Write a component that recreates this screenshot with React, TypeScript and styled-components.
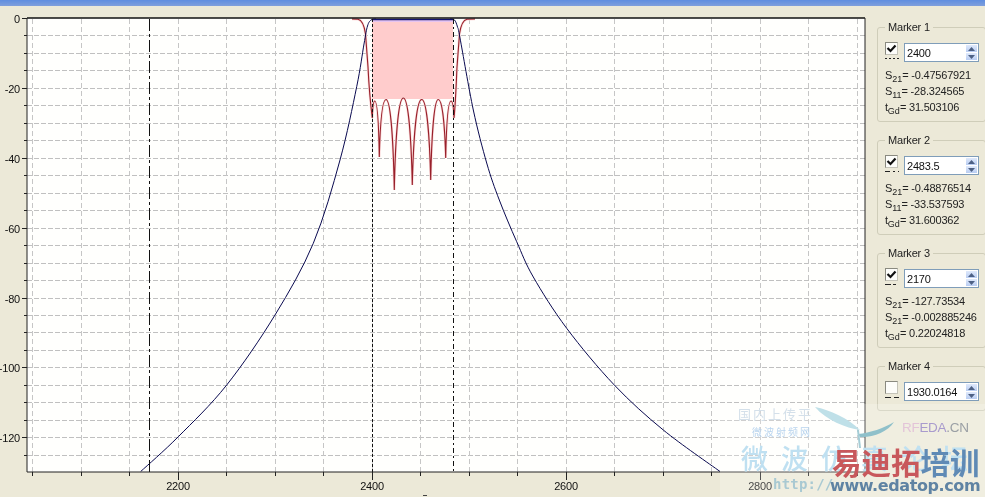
import React from "react";
import styled, { createGlobalStyle } from "styled-components";

const Global = createGlobalStyle`
  html, body { margin: 0; padding: 0; background: #ece9d8; }
  #root { width: 985px; height: 497px; }
`;

const Page = styled.div`
  position: relative;
  width: 985px;
  height: 497px;
  overflow: hidden;
  display: flex;
  flex-direction: column;
  background: #ece9d8;
  font-family: "Liberation Sans", Arial, sans-serif;
  color: #222;
  filter: blur(0.3px);
`;

const TitleStrip = styled.div`
  height: 6px;
  flex: none;
  background: linear-gradient(#5f8ee0, #7f9fdc);
`;

const Body = styled.div`
  flex: 1;
  display: flex;
  min-height: 0;
`;

const ChartSvg = styled.svg`
  display: block;
  flex: none;
  width: 877px;
  height: 491px;
`;

const AxisLabel = styled.text`
  font-family: "Liberation Sans", Arial, sans-serif;
  font-size: 11px;
  letter-spacing: -0.2px;
  fill: #111;
`;

const Side = styled.aside`
  flex: 1;
  display: flex;
  flex-direction: column;
  gap: 18px;
  padding: 21px 0 0 0;
  margin-right: -1px;
`;

const Group = styled.section<{ $h: number }>`
  position: relative;
  height: ${(p) => p.$h}px;
  box-sizing: border-box;
  border: 1px solid #cfcdb9;
  border-radius: 3px;
  padding: 15px 0 0 7px;
`;

const GroupTitle = styled.span`
  position: absolute;
  top: -7px;
  left: 7px;
  padding: 0 3px;
  background: #ece9d8;
  font-size: 11px;
  line-height: 13px;
  letter-spacing: -0.2px;
  color: #222;
`;

const MarkerRow = styled.div`
  display: flex;
  gap: 5px;
`;

const CheckCol = styled.div`
  width: 14px;
  display: flex;
  flex-direction: column;
  gap: 2px;
  margin-top: -1px;
`;

const CheckBox = styled.span`
  width: 13px;
  height: 13px;
  box-sizing: border-box;
  display: block;
  background: #fdfdfa;
  border: 1px solid #c4c3b8;
  border-top-color: #8a8a80;
  border-left-color: #8a8a80;
`;

const CheckMark = styled.svg`
  display: block;
  width: 11px;
  height: 11px;
`;

const Sample = styled.svg`
  display: block;
  width: 14px;
  height: 3px;
`;

const Spin = styled.div`
  width: 75px;
  height: 19px;
  box-sizing: border-box;
  display: flex;
  background: #fff;
  border: 1px solid #7f9db9;
`;

const SpinInput = styled.input`
  flex: 1;
  min-width: 0;
  border: 0;
  outline: 0;
  padding: 0 0 0 2px;
  background: transparent;
  font-family: "Liberation Sans", Arial, sans-serif;
  font-size: 11px;
  letter-spacing: -0.2px;
  color: #111;
`;

const SpinButtons = styled.div`
  width: 11px;
  margin: 1px;
  display: flex;
  flex-direction: column;
  gap: 1px;
`;

const SpinButton = styled.div`
  flex: 1;
  display: flex;
  align-items: center;
  justify-content: center;
  background: linear-gradient(#dfe9fb, #b9cdf2);
`;

const Arrow = styled.svg`
  display: block;
  width: 7px;
  height: 4px;
`;

const Readouts = styled.div`
  margin-top: 5px;
`;

const Readout = styled.div`
  height: 16px;
  line-height: 16px;
  font-size: 11px;
  letter-spacing: -0.2px;
  white-space: nowrap;
  color: #222;
`;

const Sub = styled.sub`
  font-size: 9px;
  line-height: 0;
  vertical-align: -3px;
  letter-spacing: 0;
`;

/* Watermark stamped over the lower right corner of the picture */
const WatermarkGlow = styled.div`
  position: absolute;
  left: 720px;
  top: 404px;
  width: 265px;
  height: 93px;
  background: rgba(255, 255, 255, 0.22);
`;

const Mark = styled.div<{ $x: number; $y: number }>`
  position: absolute;
  left: ${(p) => p.$x}px;
  top: ${(p) => p.$y}px;
  white-space: nowrap;
`;

const FaintTitle = styled(Mark)`
  font-family: "Noto Sans CJK SC", sans-serif;
  font-size: 13px;
  line-height: 14px;
  letter-spacing: 2px;
  color: #d4e0ea;
`;

const FaintSub = styled(Mark)`
  font-family: "Noto Sans CJK SC", sans-serif;
  font-size: 10px;
  line-height: 12px;
  letter-spacing: 2px;
  color: #b9d4ee;
`;

const Forum = styled(Mark)`
  font-family: "Noto Sans CJK SC", sans-serif;
  font-size: 27px;
  font-weight: 500;
  line-height: 30px;
  letter-spacing: 13px;
  color: #bfe0f1;
`;

const HttpText = styled(Mark)`
  font-family: "DejaVu Sans Mono", monospace;
  font-size: 14px;
  line-height: 16px;
  font-weight: 700;
  letter-spacing: 0.2px;
  color: #a9c9d2;
`;

const RfText = styled(Mark)`
  font-size: 13.5px;
  line-height: 14px;
  letter-spacing: -0.3px;
  display: flex;
`;

const RfPart = styled.span<{ $c: string }>`
  color: ${(p) => p.$c};
`;

const BrandCn = styled(Mark)`
  font-family: "Noto Sans CJK SC", sans-serif;
  font-size: 29.5px;
  font-weight: 700;
  line-height: 32px;
  display: flex;
`;

const BrandPart = styled.span<{ $c: string }>`
  color: ${(p) => p.$c};
`;

const BrandUrl = styled(Mark)`
  font-family: "DejaVu Sans", sans-serif;
  font-size: 16px;
  font-weight: 700;
  line-height: 18px;
  letter-spacing: -0.4px;
  color: #5f83a3;
`;

const Dragonfly = styled.svg`
  position: absolute;
  left: 810px;
  top: 402px;
  width: 90px;
  height: 60px;
`;

type P = [number, number];

const smooth = (pts: P[]) => {
  let d = `M${pts[0][0]} ${pts[0][1]}`;
  for (let i = 0; i < pts.length - 1; i++) {
    const a = pts[Math.max(i - 1, 0)];
    const b = pts[i];
    const c = pts[i + 1];
    const e = pts[Math.min(i + 2, pts.length - 1)];
    d += ` C${(b[0] + (c[0] - a[0]) / 6).toFixed(1)} ${(b[1] + (c[1] - a[1]) / 6).toFixed(1)} ${(c[0] - (e[0] - b[0]) / 6).toFixed(1)} ${(c[1] - (e[1] - b[1]) / 6).toFixed(1)} ${c[0]} ${c[1]}`;
  }
  return d;
};

const blue: P[] = [
  [140.7, 471.5], [178.3, 436.7], [226.7, 385], [275, 315], [313.3, 243.3], [340, 160], [356.7, 86.7], [364, 44], [367.5, 26], [371, 20], [376, 19],
];
const blueRight: P[] = [
  [450, 19], [454.5, 20], [457.5, 27], [460, 38], [473.3, 110], [486.7, 163], [499.3, 200], [516.7, 241.7],
  [533.3, 277], [566.7, 328.3], [614.3, 385], [663.3, 430], [720, 471.5],
];

// S11: alternating arches with sharp cusps at each reflection zero
const cusps: P[] = [
  [372.3, 118], [379.3, 157], [394.3, 190], [412.3, 185], [430.7, 180], [445.7, 158], [454, 118],
];
const peaks: P[] = [
  [374.8, 101], [386, 99.5], [403.3, 98], [421.7, 99.5], [438.3, 99.5], [451, 101],
];

const s11 = (() => {
  let d = "M352 19 L358 19.3 C362 20 364 24 365.5 34 L368 67 C369 88 370.5 104 372.3 118";
  cusps.slice(0, -1).forEach((c, i) => {
    const p = peaks[i];
    const n = cusps[i + 1];
    const lw = p[0] - c[0];
    const rw = n[0] - p[0];
    const lh = c[1] - p[1];
    const rh = n[1] - p[1];
    d += ` C${c[0] + lw * 0.12} ${c[1] - lh * 0.55} ${p[0] - lw * 0.55} ${p[1]} ${p[0]} ${p[1]}`;
    d += ` C${p[0] + rw * 0.55} ${p[1]} ${n[0] - rw * 0.12} ${n[1] - rh * 0.55} ${n[0]} ${n[1]}`;
  });
  d += " C455.5 104 456 88 457 67 L459.5 34 C461 24 463 20 467 19.3 L475 19";
  return d;
})();

const verticals = Array.from({ length: 18 }, (_, i) => Math.floor(32.5 + i * 48.5) + 0.5);
const horizontals = Array.from({ length: 26 }, (_, i) => Math.round(18 + i * 17.47) + 0.5);
const xLabels = [
  { x: 178, t: "2200" },
  { x: 372, t: "2400" },
  { x: 566, t: "2600" },
  { x: 760, t: "2800" },
];
const yLabels = [0, -20, -40, -60, -80, -100, -120];

function Chart() {
  return (
    <ChartSvg viewBox="0 6 877 491">
      <rect x="27" y="18" width="838" height="454" fill="#fffffd" />
      {horizontals.slice(1).map((y) => (
        <line key={y} x1="27" x2="865" y1={y} y2={y} stroke="#c0c0c0" strokeDasharray="5 2" />
      ))}
      {verticals.map((x) => (
        <line key={x} x1={x} x2={x} y1="19" y2="472" stroke="#c6c6c6" strokeDasharray="5 3" />
      ))}
      <rect x="372" y="19" width="81" height="80" fill="#ffcccc" />
      <rect x="372" y="19" width="81" height="3" fill="#e6c4f0" />

      <path d={s11} fill="none" stroke="#fbdcdc" strokeWidth="2.5" />
      <path d={s11} fill="none" stroke="#98202a" strokeWidth="1.1" />
      <path d={smooth(blue)} fill="none" stroke="#0a0a50" strokeWidth="1" />
      <path d={smooth(blueRight)} fill="none" stroke="#0a0a50" strokeWidth="1" />
      <line x1="372" x2="454" y1="19.5" y2="19.5" stroke="#14146e" strokeWidth="1.6" />

      <line x1="149.5" x2="149.5" y1="19" y2="472" stroke="#111" strokeDasharray="12 3 3 3" />
      <line x1="372.5" x2="372.5" y1="19" y2="472" stroke="#111" strokeDasharray="3 2" />
      <line x1="453.5" x2="453.5" y1="19" y2="472" stroke="#111" strokeDasharray="5 3 2 3" />

      <line x1="27" x2="865" y1="18" y2="18" stroke="#111" strokeWidth="1.5" />
      <line x1="27" x2="865" y1="472" y2="472" stroke="#222" strokeWidth="1.2" />
      <line x1="27" x2="27" y1="18" y2="472" stroke="#222" />
      <line x1="865" x2="865" y1="18" y2="472" stroke="#222" />

      {verticals.map((x, i) => (
        <line key={x} x1={x} x2={x} y1="472" y2={i % 4 === 3 ? 480 : 476} stroke="#222" />
      ))}
      {horizontals.map((y, i) => (
        <line key={y} x1={i % 4 === 0 ? 22 : 24} x2="27" y1={y} y2={y} stroke="#222" />
      ))}
      {yLabels.map((v, i) => (
        <AxisLabel key={v} x="20" y={18 + i * 69.88 + 5} textAnchor="end">
          {v}
        </AxisLabel>
      ))}
      {xLabels.map((l) => (
        <AxisLabel key={l.t} x={l.x} y="490" textAnchor="middle">
          {l.t}
        </AxisLabel>
      ))}
      <line x1="423" x2="427" y1="495.5" y2="495.5" stroke="#444" />
    </ChartSvg>
  );
}

type MarkerData = {
  name: string;
  value: string;
  on: boolean;
  dash: string;
  rows?: { s: string; sub: string; v: string }[];
};

const markers: MarkerData[] = [
  {
    name: "Marker 1",
    value: "2400",
    on: true,
    dash: "2 2",
    rows: [
      { s: "S", sub: "21", v: "-0.47567921" },
      { s: "S", sub: "11", v: "-28.324565" },
      { s: "t", sub: "Gd", v: "31.503106" },
    ],
  },
  {
    name: "Marker 2",
    value: "2483.5",
    on: true,
    dash: "5 3 2 3",
    rows: [
      { s: "S", sub: "21", v: "-0.48876514" },
      { s: "S", sub: "11", v: "-33.537593" },
      { s: "t", sub: "Gd", v: "31.600362" },
    ],
  },
  {
    name: "Marker 3",
    value: "2170",
    on: true,
    dash: "6 2 3 3",
    rows: [
      { s: "S", sub: "21", v: "-127.73534" },
      { s: "S", sub: "21", v: "-0.002885246" },
      { s: "t", sub: "Gd", v: "0.22024818" },
    ],
  },
  { name: "Marker 4", value: "1930.0164", on: false, dash: "6 3" },
];

function MarkerGroup({ m }: { m: MarkerData }) {
  return (
    <Group $h={m.rows ? 95 : 45}>
      <GroupTitle>{m.name}</GroupTitle>
      <MarkerRow>
        <CheckCol>
          <CheckBox>
            {m.on && (
              <CheckMark viewBox="0 0 11 11">
                <path d="M1.5 5 L4.5 8 L9.5 2.5" fill="none" stroke="#111" strokeWidth="2.2" />
              </CheckMark>
            )}
          </CheckBox>
          <Sample viewBox="0 0 14 3">
            <line x1="0" x2="14" y1="1.5" y2="1.5" stroke="#222" strokeDasharray={m.dash} />
          </Sample>
        </CheckCol>
        <Spin>
          <SpinInput readOnly value={m.value} />
          <SpinButtons>
            <SpinButton>
              <Arrow viewBox="0 0 7 4">
                <path d="M3.5 0 L7 4 L0 4 Z" fill="#4d6185" />
              </Arrow>
            </SpinButton>
            <SpinButton>
              <Arrow viewBox="0 0 7 4">
                <path d="M0 0 L7 0 L3.5 4 Z" fill="#4d6185" />
              </Arrow>
            </SpinButton>
          </SpinButtons>
        </Spin>
      </MarkerRow>
      {m.rows && (
        <Readouts>
          {m.rows.map((r) => (
            <Readout key={r.s + r.sub + r.v}>
              {r.s}
              <Sub>{r.sub}</Sub>= {r.v}
            </Readout>
          ))}
        </Readouts>
      )}
    </Group>
  );
}

export default function App() {
  return (
    <Page>
      <Global />
      <TitleStrip />
      <Body>
        <Chart />
        <Side>
          {markers.map((m) => (
            <MarkerGroup key={m.name} m={m} />
          ))}
        </Side>
      </Body>

      <WatermarkGlow />
      <FaintTitle $x={738} $y={407}>国内上传平</FaintTitle>
      <FaintSub $x={752} $y={426}>微波射频网</FaintSub>
      <Dragonfly viewBox="0 0 90 60">
        <path d="M5 5 C20 8 38 16 50 28 C36 26 16 18 5 5 Z" fill="#bfe0e8" />
        <path d="M48 32 C60 31 74 26 84 20 C78 30 62 36 50 35 Z" fill="#8fc0ca" />
        <path d="M48 28 L50 46" stroke="#a5cdd6" strokeWidth="2" fill="none" />
      </Dragonfly>
      <Forum $x={741} $y={443}>微波仿真论坛</Forum>
      <RfText $x={902} $y={421}>
        <RfPart $c="#e3c4d8">RF</RfPart>
        <RfPart $c="#a99bcd">EDA</RfPart>
        <RfPart $c="#9a9fa4">.CN</RfPart>
      </RfText>
      <HttpText $x={773} $y={476}>http://</HttpText>
      <BrandCn $x={832} $y={445}>
        <BrandPart $c="#c8585c">易迪拓</BrandPart>
        <BrandPart $c="#5f8ab5">培训</BrandPart>
      </BrandCn>
      <BrandUrl $x={830} $y={477}>www.edatop.com</BrandUrl>
    </Page>
  );
}
